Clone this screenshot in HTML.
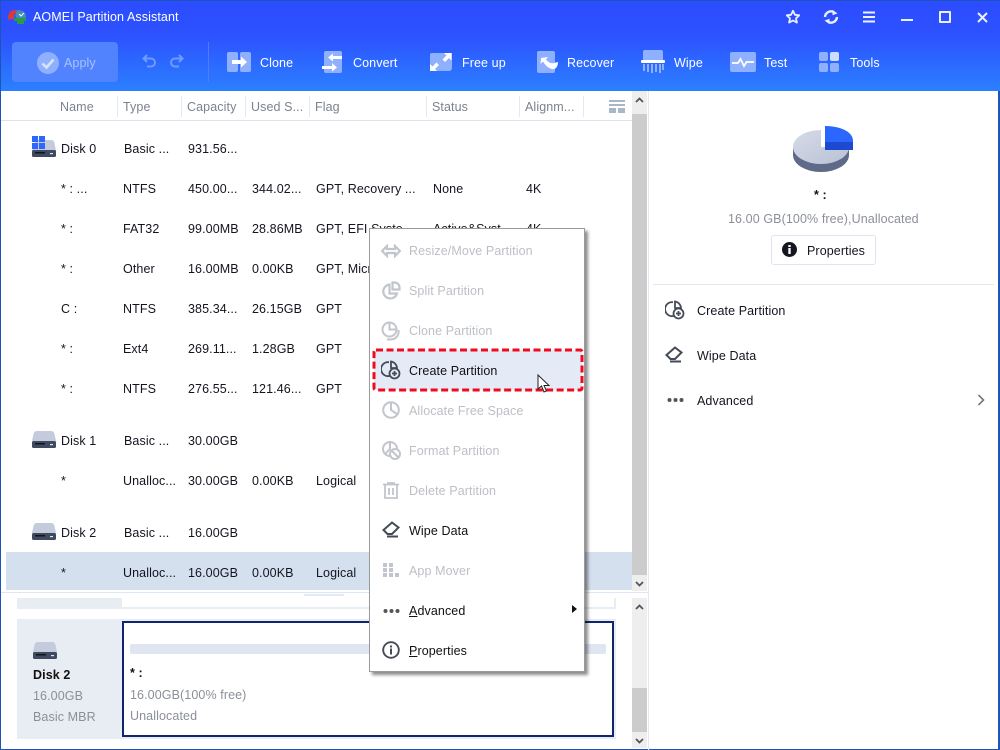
<!DOCTYPE html>
<html><head><meta charset="utf-8"><style>
html,body{margin:0;padding:0;width:1000px;height:750px;overflow:hidden;background:#fff}
body{position:relative;font-family:"Liberation Sans",sans-serif;font-size:12.5px;color:#14141f}
.a,.t,svg{position:absolute}
.t{white-space:nowrap;line-height:16px;letter-spacing:.1px}
.w{color:#fff;font-size:12.5px;letter-spacing:.1px}
.h{color:#7c8290;top:99px}
.g{color:#bcbfc6}
.m{left:409px}
.d{color:#8b8f9a}
.sep{position:absolute;top:96px;width:1px;height:21px;background:#e4e8ef}
</style></head><body>
<div class="a" style="left:0;top:0;width:1000px;height:91px;background:linear-gradient(#2c4cff 0,#2d52ff 40%,#2b80ff 100%)"></div>
<div class="a" style="left:0;top:0;width:1000px;height:1px;background:#1c55b8"></div>
<div class="a" style="left:0;top:0;width:1px;height:750px;background:#1c55b8"></div>
<div class="a" style="left:998px;top:91px;width:2px;height:659px;background:#1c55b8"></div>
<div class="a" style="left:0;top:749px;width:1000px;height:1px;background:#1c55b8"></div>

<svg style="left:7px;top:9px" width="20" height="16" viewBox="0 0 20 16"><path d="M1 8C1 4 4 1 8 1L10 1L10 4L7 5L7 10L3 10L1 11Z" fill="#d83a3a"/><path d="M10 1C15 1 19 3 19 7L19 9L10 9L8 7Z" fill="#3f8fb8"/><path d="M7 9H19V12H17V15H10V12H7Z" fill="#2c9a4a"/><path d="M12 5l2 2 3-3" stroke="#fff" fill="none"/></svg>
<div class="t w" style="left:33px;top:9px;">AOMEI Partition Assistant</div>

<svg style="left:785px;top:9px" width="16" height="16" viewBox="0 0 16 16"><path d="M8 1.800l1.900 4 4.300.5-3.200 3 .9 4.300L8 11.500l-3.900 2.100.9-4.300-3.200-3 4.300-.5z" fill="none" stroke="#eaf0ff" stroke-width="1.800" stroke-linejoin="round"/></svg>
<svg style="left:823px;top:9px" width="16" height="16" viewBox="0 0 16 16"><path d="M2 8a6 6 0 0 1 9-4.800M14 8a6 6 0 0 1-9 4.800" fill="none" stroke="#eaf0ff" stroke-width="2.400"/><path d="M9.500 1l5 3.400-5 1.800zM6.500 15l-5-3.400 5-1.800z" fill="#eaf0ff"/></svg>
<svg style="left:863px;top:11px" width="13" height="12" viewBox="0 0 13 12"><path d="M0 1.500h12M0 6h12M0 10.500h12" stroke="#eaf0ff" stroke-width="2"/></svg>
<div class="a" style="left:901px;top:19px;width:12px;height:2px;background:#eaf0ff"></div>
<div class="a" style="left:939px;top:11px;width:8px;height:8px;border:2px solid #eaf0ff;border-radius:1px"></div>
<svg style="left:977px;top:12px" width="11" height="11" viewBox="0 0 11 11"><path d="M1 1l9 9M10 1l-9 9" stroke="#eaf0ff" stroke-width="2"/></svg>

<div class="a" style="left:12px;top:42px;width:106px;height:40px;border-radius:4px;background:#5283ff"></div>
<svg style="left:37px;top:52px" width="22" height="22" viewBox="0 0 22 22"><circle cx="11" cy="11" r="11" fill="#8fb0ff"/><path d="M5.500 11.500l4 4 7-8" fill="none" stroke="#d8e4ff" stroke-width="2.600"/></svg>
<div class="t" style="left:64px;top:55px;color:#a9c2ff">Apply</div>
<svg style="left:142px;top:54px" width="16" height="14" viewBox="0 0 16 14"><path d="M5 1L1.500 4.500 5 8M2 4.500h7a4 4 0 0 1 0 8H5" fill="none" stroke="#6f9bff" stroke-width="2"/></svg>
<svg style="left:168px;top:54px" width="16" height="14" viewBox="0 0 16 14"><path d="M11 1l3.500 3.500L11 8M14 4.500H7a4 4 0 0 0 0 8h4" fill="none" stroke="#6f9bff" stroke-width="2"/></svg>
<div class="a" style="left:208px;top:42px;width:1px;height:40px;background:#4f7cff"></div>

<svg style="left:227px;top:52px" width="25" height="21" viewBox="0 0 25 21"><rect x="0" y="0" width="11" height="20" rx="2" fill="#8fb0ff"/><rect x="13" y="0" width="11" height="20" rx="2" fill="#8fb0ff"/><path d="M5 8h9V4.500l6 5.500-6 5.500V12H5z" fill="#fff"/></svg>
<div class="t w" style="left:260px;top:55px">Clone</div>
<svg style="left:322px;top:51px" width="22" height="22" viewBox="0 0 22 22"><rect x="2" y="0" width="18" height="22" rx="2" fill="#8fb0ff"/><path d="M20 5h-9V2.500L6 6.500l5 4V8h9zM0 15h10v-3l5 4.500-5 4V18H0z" fill="#fff"/></svg>
<div class="t w" style="left:353px;top:55px">Convert</div>
<svg style="left:430px;top:53px" width="22" height="18" viewBox="0 0 22 18"><path d="M2 0h20v14a4 4 0 0 1-2 4H0V2a2 2 0 0 1 2-2z" fill="#8fb0ff"/><path d="M14 0h7.500v7.500l-2.500-2.500-4 4-2.500-2.500 4-4zM0 18v-7l2.500 2.500 4-4L9 12l-4 4 2 2z" fill="#fff"/></svg>
<div class="t w" style="left:462px;top:55px">Free up</div>
<svg style="left:537px;top:51px" width="22" height="22" viewBox="0 0 22 22"><rect width="18" height="22" rx="2" fill="#8fb0ff"/><path d="M4 7l7-1-2 2.500c2 2.500 5 4.500 8 3.500l4-1c0 5-3 8-6 7-4-1-7-4-9-7.500L3.500 13z" fill="#fff"/></svg>
<div class="t w" style="left:567px;top:55px">Recover</div>
<svg style="left:641px;top:50px" width="24" height="24" viewBox="0 0 24 24"><path d="M2 2a2 2 0 0 1 2-2h16a2 2 0 0 1 2 2v9H2z" fill="#8fb0ff"/><rect y="10" width="24" height="3" rx="1" fill="#fff"/><path d="M3 14v7M7 14v8M11 14v9M15 14v8M19 14v9M22 14v6" stroke="#8fb0ff" stroke-width="2"/></svg>
<div class="t w" style="left:674px;top:55px">Wipe</div>
<svg style="left:730px;top:52px" width="26" height="20" viewBox="0 0 26 20"><rect width="26" height="20" rx="2" fill="#8fb0ff"/><path d="M2 11h6l2.500-4 3.500 7 2.500-4H24" fill="none" stroke="#fff" stroke-width="1.800"/></svg>
<div class="t w" style="left:764px;top:55px">Test</div>
<svg style="left:819px;top:52px" width="20" height="20" viewBox="0 0 20 20"><rect width="9" height="9" rx="2" fill="#8fb0ff"/><rect x="11" width="9" height="9" rx="2" fill="#cfdcff"/><rect y="11" width="9" height="9" rx="2" fill="#8fb0ff"/><rect x="11" y="11" width="9" height="9" rx="2" fill="#8fb0ff"/></svg>
<div class="t w" style="left:850px;top:55px">Tools</div>

<div class="a" style="left:1px;top:120px;width:631px;height:1px;background:#dde3ec"></div>
<div class="t h" style="left:60px">Name</div><div class="t h" style="left:123px">Type</div><div class="t h" style="left:187px">Capacity</div><div class="t h" style="left:251px">Used S...</div><div class="t h" style="left:315px">Flag</div><div class="t h" style="left:432px">Status</div><div class="t h" style="left:525px">Alignm...</div>
<div class="sep" style="left:117px"></div><div class="sep" style="left:181px"></div><div class="sep" style="left:245px"></div><div class="sep" style="left:309px"></div><div class="sep" style="left:426px"></div><div class="sep" style="left:519px"></div><div class="sep" style="left:583px"></div>
<svg style="left:609px;top:100px" width="16" height="13" viewBox="0 0 16 13"><rect width="16" height="2" fill="#a9b6c8"/><rect y="4" width="16" height="2" fill="#a9b6c8"/><rect y="8" width="7" height="5" fill="#a9b6c8"/><rect x="9" y="8" width="7" height="5" fill="#a9b6c8"/></svg>

<div class="a" style="left:632px;top:91px;width:15px;height:500px;background:#eeeeee"></div>
<div class="a" style="left:632px;top:114px;width:15px;height:461px;background:#cccccc"></div>
<svg style="left:635px;top:97px" width="9" height="6" viewBox="0 0 9 6"><path d="M1 5l3.500-3.500L8 5" fill="none" stroke="#555" stroke-width="1.800"/></svg>
<svg style="left:635px;top:581px" width="9" height="6" viewBox="0 0 9 6"><path d="M1 1l3.500 3.500L8 1" fill="none" stroke="#555" stroke-width="1.800"/></svg>
<div class="a" style="left:648px;top:91px;width:1px;height:659px;background:#e2e7f1"></div>

<div class="a" style="left:6px;top:552px;width:626px;height:38px;background:#d5e0ef"></div>

<svg style="left:32px;top:136px" width="25" height="21" viewBox="0 0 25 21"><path d="M6 4h13c2 0 3 1 3.500 3L24 15H0L2 7z" fill="#c4cbdc"/><rect y="14" width="24" height="7" rx="1.500" fill="#3f4a61"/><rect x="3" y="16" width="10" height="1.500" fill="#12151d"/><rect x="18" y="17" width="3" height="1.200" fill="#dfe4ee"/><path d="M0 0h6v6H0zM7 0h6v6H7zM0 7h6v6H0zM7 7h6v6H7z" fill="#2f66ff"/></svg>
<svg style="left:32px;top:431px" width="24" height="17" viewBox="0 0 24 17"><path d="M5 0h14c2 0 3 1 3.500 3L24 10H0L1.500 3C2 1 3 0 5 0z" fill="#c4cbdc"/><rect y="10" width="24" height="7" rx="1.500" fill="#3f4a61"/><rect x="3" y="12" width="10" height="1.500" fill="#12151d"/><rect x="18" y="13" width="3" height="1.200" fill="#dfe4ee"/></svg>
<svg style="left:32px;top:523px" width="24" height="17" viewBox="0 0 24 17"><path d="M5 0h14c2 0 3 1 3.500 3L24 10H0L1.500 3C2 1 3 0 5 0z" fill="#c4cbdc"/><rect y="10" width="24" height="7" rx="1.500" fill="#3f4a61"/><rect x="3" y="12" width="10" height="1.500" fill="#12151d"/><rect x="18" y="13" width="3" height="1.200" fill="#dfe4ee"/></svg>

<div class="t" style="left:61px;top:141px">Disk 0</div><div class="t" style="left:124px;top:141px">Basic ...</div><div class="t" style="left:188px;top:141px">931.56...</div>
<div class="t" style="left:61px;top:181px">* : ...</div><div class="t" style="left:123px;top:181px">NTFS</div><div class="t" style="left:188px;top:181px">450.00...</div><div class="t" style="left:252px;top:181px">344.02...</div><div class="t" style="left:316px;top:181px">GPT, Recovery ...</div><div class="t" style="left:433px;top:181px">None</div><div class="t" style="left:526px;top:181px">4K</div>
<div class="t" style="left:61px;top:221px">* :</div><div class="t" style="left:123px;top:221px">FAT32</div><div class="t" style="left:188px;top:221px">99.00MB</div><div class="t" style="left:252px;top:221px">28.86MB</div><div class="t" style="left:316px;top:221px">GPT, EFI Syste...</div><div class="t" style="left:433px;top:221px">Active&amp;Syst...</div><div class="t" style="left:526px;top:221px">4K</div>
<div class="t" style="left:61px;top:261px">* :</div><div class="t" style="left:123px;top:261px">Other</div><div class="t" style="left:188px;top:261px">16.00MB</div><div class="t" style="left:252px;top:261px">0.00KB</div><div class="t" style="left:316px;top:261px">GPT, Micr</div>
<div class="t" style="left:61px;top:301px">C :</div><div class="t" style="left:123px;top:301px">NTFS</div><div class="t" style="left:188px;top:301px">385.34...</div><div class="t" style="left:252px;top:301px">26.15GB</div><div class="t" style="left:316px;top:301px">GPT</div>
<div class="t" style="left:61px;top:341px">* :</div><div class="t" style="left:123px;top:341px">Ext4</div><div class="t" style="left:188px;top:341px">269.11...</div><div class="t" style="left:252px;top:341px">1.28GB</div><div class="t" style="left:316px;top:341px">GPT</div>
<div class="t" style="left:61px;top:381px">* :</div><div class="t" style="left:123px;top:381px">NTFS</div><div class="t" style="left:188px;top:381px">276.55...</div><div class="t" style="left:252px;top:381px">121.46...</div><div class="t" style="left:316px;top:381px">GPT</div>
<div class="t" style="left:61px;top:433px">Disk 1</div><div class="t" style="left:124px;top:433px">Basic ...</div><div class="t" style="left:188px;top:433px">30.00GB</div>
<div class="t" style="left:61px;top:473px">*</div><div class="t" style="left:123px;top:473px">Unalloc...</div><div class="t" style="left:188px;top:473px">30.00GB</div><div class="t" style="left:252px;top:473px">0.00KB</div><div class="t" style="left:316px;top:473px">Logical</div>
<div class="t" style="left:61px;top:525px">Disk 2</div><div class="t" style="left:124px;top:525px">Basic ...</div><div class="t" style="left:188px;top:525px">16.00GB</div>
<div class="t" style="left:61px;top:565px">*</div><div class="t" style="left:123px;top:565px">Unalloc...</div><div class="t" style="left:188px;top:565px">16.00GB</div><div class="t" style="left:252px;top:565px">0.00KB</div><div class="t" style="left:316px;top:565px">Logical</div>

<div class="a" style="left:1px;top:592px;width:647px;height:1px;background:#dfe6f3"></div>
<div class="a" style="left:304px;top:594px;width:40px;height:2px;background:#e4eaf4"></div>
<div class="a" style="left:17px;top:598px;width:105px;height:11px;background:#e8ecf3"></div>
<div class="a" style="left:122px;top:607px;width:494px;height:2px;background:#e8ecf3"></div>
<div class="a" style="left:614px;top:598px;width:2px;height:11px;background:#e8ecf3"></div>
<div class="a" style="left:17px;top:619px;width:599px;height:120px;background:#e8ecf3"></div>
<div class="a" style="left:122px;top:621px;width:488px;height:112px;background:#fff;border:2px solid #12246e"></div>
<div class="a" style="left:130px;top:644px;width:476px;height:10px;border-radius:2px;background:#dfe6f2"></div>
<svg style="left:33px;top:642px" width="24" height="17" viewBox="0 0 24 17"><path d="M5 0h14c2 0 3 1 3.500 3L24 10H0L1.500 3C2 1 3 0 5 0z" fill="#c4cbdc"/><rect y="10" width="24" height="7" rx="1.500" fill="#3f4a61"/><rect x="3" y="12" width="10" height="1.500" fill="#12151d"/><rect x="18" y="13" width="3" height="1.200" fill="#dfe4ee"/></svg>
<div class="t" style="left:33px;top:667px;font-weight:bold;color:#111">Disk 2</div>
<div class="t d" style="left:33px;top:688px">16.00GB</div>
<div class="t d" style="left:33px;top:709px">Basic MBR</div>
<div class="t" style="left:130px;top:665px;font-weight:bold;color:#111">* :</div>
<div class="t d" style="left:130px;top:687px">16.00GB(100% free)</div>
<div class="t d" style="left:130px;top:708px">Unallocated</div>

<div class="a" style="left:632px;top:598px;width:15px;height:150px;background:#eeeeee"></div>
<div class="a" style="left:632px;top:688px;width:15px;height:44px;background:#cccccc"></div>
<svg style="left:635px;top:604px" width="9" height="6" viewBox="0 0 9 6"><path d="M1 5l3.500-3.500L8 5" fill="none" stroke="#555" stroke-width="1.800"/></svg>
<svg style="left:635px;top:738px" width="9" height="6" viewBox="0 0 9 6"><path d="M1 1l3.500 3.500L8 1" fill="none" stroke="#555" stroke-width="1.800"/></svg>

<svg style="left:792px;top:125px" width="62" height="48" viewBox="0 0 62 48"><defs><linearGradient id="pg" x1="0" y1="0" x2="1" y2="1"><stop offset="0" stop-color="#d6dbe8"/><stop offset="1" stop-color="#b9c1d4"/></linearGradient></defs><ellipse cx="29" cy="30" rx="28" ry="17" fill="#5e6a88"/><rect x="1" y="22" width="56" height="8" fill="#5e6a88"/><ellipse cx="29" cy="22" rx="28" ry="17" fill="url(#pg)"/><rect x="29" y="0" width="33" height="22" fill="#fff"/><path d="M33 1c14 0 28 5 28 15v9H33z" fill="#2b66ff"/><path d="M33 17h28v8H33z" fill="#1c49cf"/></svg>
<div class="t" style="left:814px;top:187px;font-weight:bold;color:#111">* :</div>
<div class="t d" style="left:728px;top:211px">16.00 GB(100% free),Unallocated</div>
<div class="a" style="left:771px;top:235px;width:103px;height:28px;border:1px solid #dfe5f0;border-radius:3px"></div>
<svg style="left:782px;top:242px" width="15" height="15" viewBox="0 0 15 15"><circle cx="7.500" cy="7.500" r="7.500" fill="#14171f"/><rect x="6.300" y="6" width="2.400" height="6" fill="#fff"/><rect x="6.300" y="3" width="2.400" height="2" fill="#fff"/></svg>
<div class="t" style="left:807px;top:243px">Properties</div>
<div class="a" style="left:653px;top:284px;width:341px;height:1px;background:#e2e7f1"></div>
<svg style="left:665px;top:300px" width="20" height="20" viewBox="0 0 20 20"><g fill="none" stroke="#444b57" stroke-width="1.800"><path d="M8 2.200a7 7 0 1 0 1.500 13.500"/><path d="M10 1.500a7 7 0 0 1 6 6.500h-6z"/><circle cx="13.500" cy="13.500" r="5" fill="#fff"/><path d="M11 13.500h5M13.500 11v5"/></g></svg>
<div class="t" style="left:697px;top:303px">Create Partition</div>
<svg style="left:665px;top:346px" width="19" height="17" viewBox="0 0 19 17"><g fill="none" stroke="#444b57" stroke-width="2"><path d="M1.500 9L10 1.500l6.500 5-6.500 6.500H5.500z"/><path d="M5 15.500h11"/></g></svg>
<div class="t" style="left:697px;top:348px">Wipe Data</div>
<svg style="left:667px;top:397px" width="17" height="6" viewBox="0 0 17 6"><circle cx="2.500" cy="3" r="2" fill="#555"/><circle cx="8.500" cy="3" r="2" fill="#555"/><circle cx="14.500" cy="3" r="2" fill="#555"/></svg>
<div class="t" style="left:697px;top:393px">Advanced</div>
<svg style="left:977px;top:394px" width="8" height="12" viewBox="0 0 8 12"><path d="M1.500 1l5 5-5 5" fill="none" stroke="#777" stroke-width="1.600"/></svg>

<div class="a" style="left:369px;top:228px;width:214px;height:442px;background:#fff;border:1px solid #9a9a9a;box-shadow:3px 3px 3px rgba(0,0,0,.45)"></div>
<svg style="left:372px;top:348px" width="212" height="44" viewBox="0 0 212 44"><rect x="2" y="2" width="208" height="40" rx="2" fill="#e4ebf6" stroke="#f00a1e" stroke-width="3" stroke-dasharray="7 3.500"/></svg>
<div class="t m g" style="top:243px">Resize/Move Partition</div>
<div class="t m g" style="top:283px">Split Partition</div>
<div class="t m g" style="top:323px">Clone Partition</div>
<div class="t m" style="top:363px;color:#111">Create Partition</div>
<div class="t m g" style="top:403px">Allocate Free Space</div>
<div class="t m g" style="top:443px">Format Partition</div>
<div class="t m g" style="top:483px">Delete Partition</div>
<div class="t m" style="top:523px;color:#111">Wipe Data</div>
<div class="t m g" style="top:563px">App Mover</div>
<div class="t m" style="top:603px;color:#111"><u>A</u>dvanced</div>
<div class="t m" style="top:643px;color:#111"><u>P</u>roperties</div>

<svg style="left:381px;top:244px" width="20" height="14" viewBox="0 0 20 14"><path d="M1 7l5-5v3h8V2l5 5-5 5V9H6v3z" fill="none" stroke="#c2c5cc" stroke-width="2.200"/></svg>
<svg style="left:382px;top:281px" width="19" height="19" viewBox="0 0 19 19"><g fill="none" stroke="#c2c5cc" stroke-width="2.200"><path d="M7.500 3.500a7 7 0 1 0 7.500 9H7.500z"/><path d="M10.500 1.500h2a5 5 0 0 1 5 5v2h-7z"/></g></svg>
<svg style="left:381px;top:321px" width="20" height="20" viewBox="0 0 20 20"><g fill="none" stroke="#c2c5cc" stroke-width="2"><circle cx="8.500" cy="8.500" r="7"/><path d="M8.500 1.500v7h7"/><path d="M17.500 9a8 8 0 0 1-7.500 9.500H6"/></g></svg>
<svg style="left:381px;top:360px" width="20" height="20" viewBox="0 0 20 20"><g fill="none" stroke="#444b57" stroke-width="1.800"><path d="M8 2.200a7 7 0 1 0 1.500 13.500"/><path d="M10 1.500a7 7 0 0 1 6 6.500h-6z"/><circle cx="13.500" cy="13.500" r="5" fill="#e4ebf6"/><path d="M11 13.500h5M13.500 11v5"/></g></svg>
<svg style="left:382px;top:401px" width="18" height="18" viewBox="0 0 18 18"><g fill="none" stroke="#c2c5cc" stroke-width="2"><circle cx="9" cy="9" r="7.800"/><path d="M9 1v8l6 4"/></g></svg>
<svg style="left:382px;top:441px" width="19" height="19" viewBox="0 0 19 19"><g fill="none" stroke="#c2c5cc" stroke-width="2"><circle cx="8" cy="8" r="7"/><path d="M8 1v7l-5 5"/><circle cx="13" cy="13" r="5" fill="#fff"/><path d="M9.500 9.500l7 7"/></g></svg>
<svg style="left:383px;top:482px" width="16" height="17" viewBox="0 0 16 17"><g fill="none" stroke="#c2c5cc" stroke-width="1.800"><path d="M0 2.500h16M5 2.500V1h6v1.500"/><path d="M2 3v13h12V3"/><path d="M6 6v7M10 6v7"/></g></svg>
<svg style="left:382px;top:521px" width="19" height="17" viewBox="0 0 19 17"><g fill="none" stroke="#444b57" stroke-width="2"><path d="M1.500 9L10 1.500l6.500 5-6.500 6.500H5.500z"/><path d="M5 15.500h11"/></g></svg>
<svg style="left:383px;top:563px" width="16" height="14" viewBox="0 0 16 14" fill="#c2c5cc"><rect width="4" height="4"/><rect x="6" width="4" height="4" y="0"/><rect y="5" width="4" height="4"/><rect x="6" y="5" width="4" height="4"/><rect x="6" y="10" width="4" height="4"/><rect y="10" width="4" height="4"/><rect x="12" y="10" width="4" height="4"/></svg>
<svg style="left:383px;top:608px" width="17" height="6" viewBox="0 0 17 6"><circle cx="2.500" cy="3" r="2" fill="#555"/><circle cx="8.500" cy="3" r="2" fill="#555"/><circle cx="14.500" cy="3" r="2" fill="#555"/></svg>
<svg style="left:572px;top:605px" width="5" height="8" viewBox="0 0 5 8"><path d="M0 0l5 4-5 4z" fill="#111"/></svg>
<svg style="left:382px;top:641px" width="18" height="18" viewBox="0 0 18 18"><circle cx="9" cy="9" r="7.800" fill="none" stroke="#444b57" stroke-width="1.900"/><rect x="8" y="7.500" width="2" height="6" fill="#444b57"/><rect x="8" y="4.500" width="2" height="2" fill="#444b57"/></svg>
<svg style="left:537px;top:374px" width="14" height="20" viewBox="0 0 14 20"><path d="M1 1v14l3.500-3 2.500 6 2.500-1-2.500-5.500h5z" fill="#fff" stroke="#222" stroke-width="1"/></svg>
</body></html>
